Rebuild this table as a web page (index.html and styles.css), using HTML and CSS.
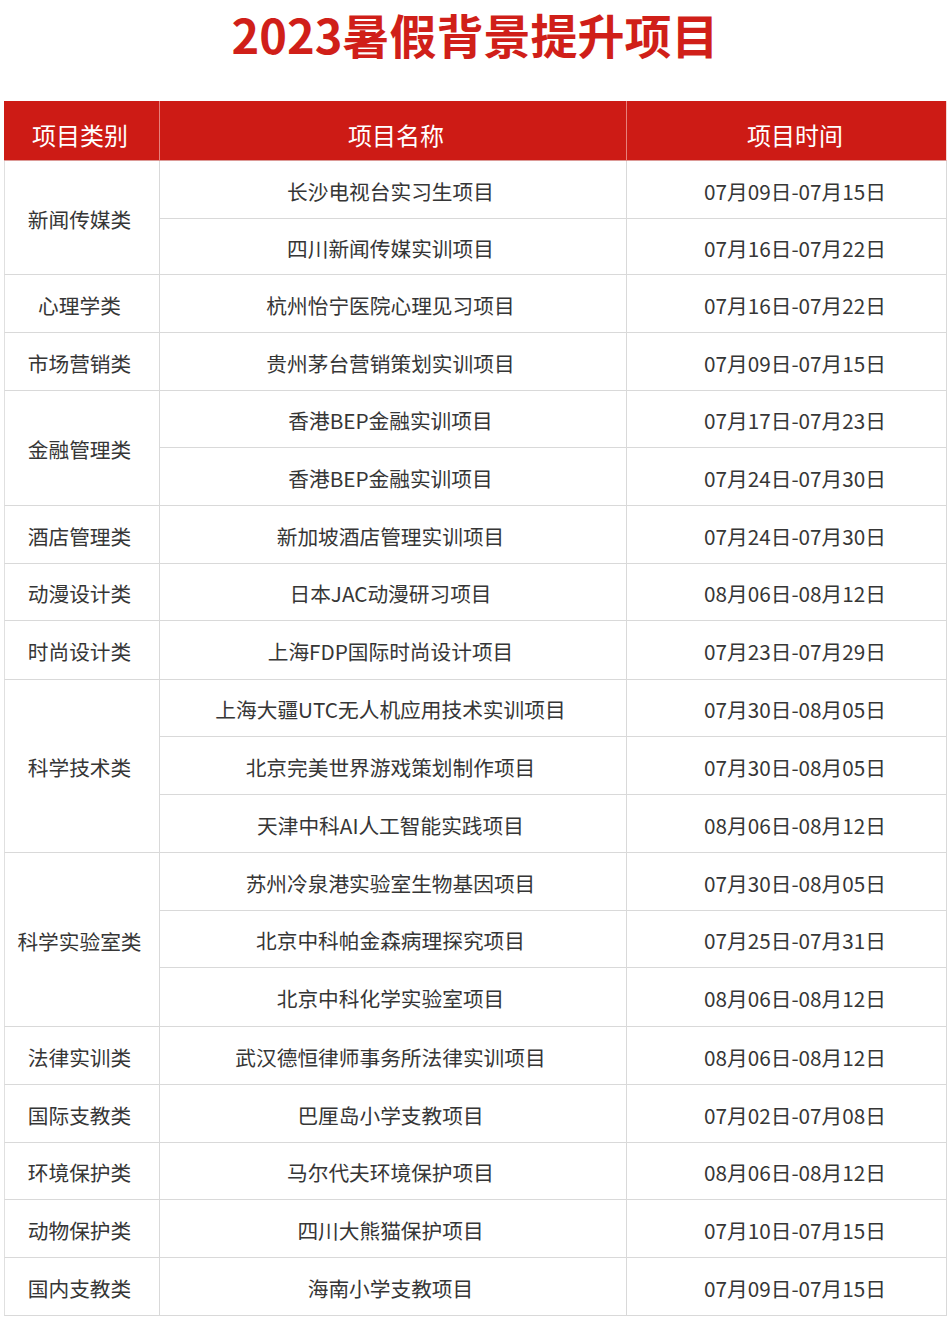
FILE: index.html
```html
<!DOCTYPE html>
<html lang="zh-CN">
<head>
<meta charset="utf-8">
<title>2023暑假背景提升项目</title>
<link rel="stylesheet" href="styles.css">
</head>
<body>
<h1 class="title">2023暑假背景提升项目</h1>
<div class="sheet">
  <div class="hd c1">项目类别</div>
  <div class="hd c2">项目名称</div>
  <div class="hd c3">项目时间</div>

  <div class="cell c1 span2">新闻传媒类</div>
  <div class="cell c2">长沙电视台实习生项目</div>
  <div class="cell c3">07月09日-07月15日</div>
  <div class="cell c2">四川新闻传媒实训项目</div>
  <div class="cell c3">07月16日-07月22日</div>

  <div class="cell c1">心理学类</div>
  <div class="cell c2">杭州怡宁医院心理见习项目</div>
  <div class="cell c3">07月16日-07月22日</div>

  <div class="cell c1">市场营销类</div>
  <div class="cell c2">贵州茅台营销策划实训项目</div>
  <div class="cell c3">07月09日-07月15日</div>

  <div class="cell c1 span2">金融管理类</div>
  <div class="cell c2">香港BEP金融实训项目</div>
  <div class="cell c3">07月17日-07月23日</div>
  <div class="cell c2">香港BEP金融实训项目</div>
  <div class="cell c3">07月24日-07月30日</div>

  <div class="cell c1">酒店管理类</div>
  <div class="cell c2">新加坡酒店管理实训项目</div>
  <div class="cell c3">07月24日-07月30日</div>

  <div class="cell c1">动漫设计类</div>
  <div class="cell c2">日本JAC动漫研习项目</div>
  <div class="cell c3">08月06日-08月12日</div>

  <div class="cell c1">时尚设计类</div>
  <div class="cell c2">上海FDP国际时尚设计项目</div>
  <div class="cell c3">07月23日-07月29日</div>

  <div class="cell c1 span3">科学技术类</div>
  <div class="cell c2">上海大疆UTC无人机应用技术实训项目</div>
  <div class="cell c3">07月30日-08月05日</div>
  <div class="cell c2">北京完美世界游戏策划制作项目</div>
  <div class="cell c3">07月30日-08月05日</div>
  <div class="cell c2">天津中科AI人工智能实践项目</div>
  <div class="cell c3">08月06日-08月12日</div>

  <div class="cell c1 span3">科学实验室类</div>
  <div class="cell c2">苏州冷泉港实验室生物基因项目</div>
  <div class="cell c3">07月30日-08月05日</div>
  <div class="cell c2">北京中科帕金森病理探究项目</div>
  <div class="cell c3">07月25日-07月31日</div>
  <div class="cell c2">北京中科化学实验室项目</div>
  <div class="cell c3">08月06日-08月12日</div>

  <div class="cell c1">法律实训类</div>
  <div class="cell c2">武汉德恒律师事务所法律实训项目</div>
  <div class="cell c3">08月06日-08月12日</div>

  <div class="cell c1">国际支教类</div>
  <div class="cell c2">巴厘岛小学支教项目</div>
  <div class="cell c3">07月02日-07月08日</div>

  <div class="cell c1">环境保护类</div>
  <div class="cell c2">马尔代夫环境保护项目</div>
  <div class="cell c3">08月06日-08月12日</div>

  <div class="cell c1">动物保护类</div>
  <div class="cell c2">四川大熊猫保护项目</div>
  <div class="cell c3">07月10日-07月15日</div>

  <div class="cell c1">国内支教类</div>
  <div class="cell c2">海南小学支教项目</div>
  <div class="cell c3">07月09日-07月15日</div>
</div>
</body>
</html>
```
FILE: styles.css
```css
html, body {
  margin: 0;
  padding: 0;
  background: #ffffff;
}

body {
  font-family: "Noto Sans CJK SC", "Noto Sans", sans-serif;
  color: #363636;
}

.title {
  margin: 0;
  height: 101px;
  box-sizing: border-box;
  line-height: 68px;
  font-size: 47px;
  font-weight: 700;
  color: #d01f19;
  text-align: center;
}

.sheet {
  margin-left: 4px;
  width: 943px;
  display: grid;
  grid-template-columns: 156px 467px 320px;
  grid-template-rows: 60px 58px 56px 58px 58px 57px 58px 58px 57px 59px 57px 58px 58px 58px 57px 59px 58px 58px 57px 58px 58px;
}

.hd,
.cell {
  box-sizing: border-box;
  display: flex;
  align-items: center;
  justify-content: center;
  white-space: nowrap;
}

.hd {
  background: #cd1b15;
  color: #ffffff;
  font-size: 24px;
  padding-top: 8px;
  border-right: 1px solid #e6807c;
  border-bottom: 1px solid #dc9a97;
}

.hd.c3 {
  border-right: 1px solid #f2d6d5;
}

.cell {
  font-size: 20.7px;
  padding-top: 2px;
  border-right: 1px solid #d9d9d9;
  border-bottom: 1px solid #d9d9d9;
}

.cell.c1 {
  grid-column: 1;
  border-left: 1px solid #e0e0e0;
  padding-right: 5px;
}

.cell.c2 {
  grid-column: 2;
  padding-right: 5px;
}

.cell.c3 {
  grid-column: 3;
  padding-left: 17px;
}

.hd.c1 {
  padding-right: 3px;
}

.hd.c2 {
  padding-left: 6px;
}

.hd.c3 {
  padding-left: 17px;
}

.span2 {
  grid-row: span 2;
}

.span3 {
  grid-row: span 3;
}
```
